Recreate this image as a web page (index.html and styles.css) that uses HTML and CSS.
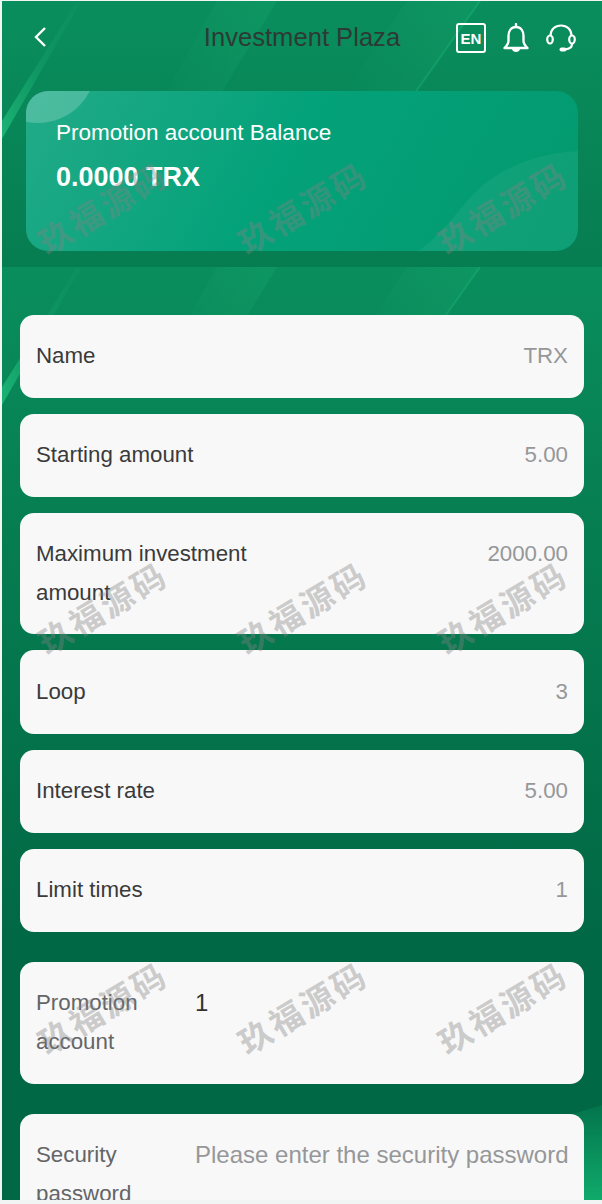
FILE: index.html
```html
<!DOCTYPE html>
<html lang="en">
<head>
    <meta charset="UTF-8">
    <title>Investment Plaza</title>
    <link rel="stylesheet" href="styles.css">
</head>
<body>

<div class="page">
    <section class="top">
        <svg class="backdrop" viewBox="0 0 600 933">
            <defs>
                <linearGradient id="base" x1="0" y1="0" x2="0" y2="1">
                    <stop offset="0" stop-color="#0a8e5d"/>
                    <stop offset="0.29" stop-color="#067d51"/>
                    <stop offset="0.72" stop-color="#016845"/>
                    <stop offset="1" stop-color="#016845"/>
                </linearGradient>
                <linearGradient id="streak" x1="0" y1="1" x2="1" y2="0">
                    <stop offset="0" stop-color="#22c27f" stop-opacity="0.75"/>
                    <stop offset="0.5" stop-color="#22c27f" stop-opacity="0.2"/>
                    <stop offset="1" stop-color="#22c27f" stop-opacity="0.05"/>
                </linearGradient>
                <linearGradient id="band" x1="0" y1="0" x2="1" y2="0">
                    <stop offset="0" stop-color="#22c27f" stop-opacity="0"/>
                    <stop offset="1" stop-color="#22c27f" stop-opacity="0.16"/>
                </linearGradient>
                <linearGradient id="corner" x1="0" y1="0" x2="0" y2="1">
                    <stop offset="0" stop-color="#03744c"/>
                    <stop offset="1" stop-color="#10aa6b"/>
                </linearGradient>
                <g id="art">
                    <rect width="600" height="933" fill="url(#base)"/>
                    <path d="M0 120 L74 2 L78 2 L0 138 Z" fill="url(#streak)"/>
                    <path d="M275 0 L205 115 L150 115 L215 0 Z" fill="url(#band)"/>
                    <path d="M478 0 L410 96 L340 96 L405 0 Z" fill="url(#band)"/>
                    <path d="M478 0 L410 96" fill="none" stroke="#22c27f" stroke-width="2" opacity="0.3"/>
                    <path d="M600 838 L530 860 L575 933 L600 933 Z" fill="url(#corner)"/>
                </g>
            </defs>
            <use href="#art"/>
        </svg>

        <header class="topbar">
            <svg class="back" viewBox="0 0 14 22">
                <path d="M12 2 L3 11 L12 20" fill="none" stroke="#fff" stroke-width="2.4"/>
            </svg>
            <h1 class="title">Investment Plaza</h1>
            <div class="tools">
                <span class="lang">EN</span>
                <svg class="bell" viewBox="0 0 26 30">
                    <path d="M13 1 V4 M13 4 C8 4 5.500 8 5.500 13 V18 C5.500 21 3.500 23 1.500 25 H24.500 C22.500 23 20.500 21 20.500 18 V13 C20.500 8 18 4 13 4 Z" fill="none" stroke="#fff" stroke-width="2.400" stroke-linejoin="round" stroke-linecap="round"/>
                    <path d="M9 26 H17 C16.500 30 9.500 30 9 26 Z" fill="#fff"/>
                </svg>
                <svg class="headset" viewBox="0 0 30 28">
                    <path d="M4.500 12 C4.500 5.500 9 1.500 15 1.500 S25.500 5.500 25.500 12" fill="none" stroke="#fff" stroke-width="2.200"/>
                    <ellipse cx="4" cy="15.500" rx="2.800" ry="4" fill="none" stroke="#fff" stroke-width="2.200"/>
                    <ellipse cx="26" cy="15.500" rx="2.800" ry="4" fill="none" stroke="#fff" stroke-width="2.200"/>
                    <path d="M26 20 C26 23.500 23 25 19 25.500" fill="none" stroke="#fff" stroke-width="2.200"/>
                    <rect x="13.500" y="23.500" width="7" height="4" rx="2" fill="#fff"/>
                </svg>
            </div>
        </header>

        <div class="balance">
            <svg class="balance-art" viewBox="0 0 552 160">
                <circle cx="12" cy="-26" r="58" fill="#fff" fill-opacity="0.2"/>
                <path d="M392 160 C422 140 436 110 462 90 C490 70 520 62 552 60 V160 Z" fill="#fff" fill-opacity="0.05"/>
            </svg>
            <p class="balance-label">Promotion account Balance</p>
            <p class="balance-num">0.0000 TRX</p>
        </div>
    </section>

    <section class="content">
        <svg class="backdrop" viewBox="0 0 600 933"><use href="#art"/></svg>

        <div class="group">
            <div class="cell"><span class="cell-title">Name</span><span class="cell-value">TRX</span></div>
            <div class="cell"><span class="cell-title">Starting amount</span><span class="cell-value">5.00</span></div>
            <div class="cell tight"><span class="cell-title">Maximum investment amount</span><span class="cell-value">2000.00</span></div>
            <div class="cell loose"><span class="cell-title">Loop</span><span class="cell-value">3</span></div>
            <div class="cell"><span class="cell-title">Interest rate</span><span class="cell-value">5.00</span></div>
            <div class="cell"><span class="cell-title">Limit times</span><span class="cell-value">1</span></div>
        </div>

        <div class="group fields">
            <label class="cell">
                <span class="field-title">Promotion account</span>
                <input class="field-input" type="text" value="1">
            </label>
            <label class="cell">
                <span class="field-title">Security password</span>
                <input class="field-input right" type="password" placeholder="Please enter the security password">
            </label>
        </div>
    </section>

    <div class="marks">
        <span class="mark">玖福源码</span><span class="mark">玖福源码</span><span class="mark">玖福源码</span>
        <span class="mark">玖福源码</span><span class="mark">玖福源码</span><span class="mark">玖福源码</span>
        <span class="mark">玖福源码</span><span class="mark">玖福源码</span><span class="mark">玖福源码</span>
    </div>
</div>

</body>
</html>
```

FILE: styles.css
```css
html, body {
    margin: 0;
    height: 1204px;
    overflow: hidden;
}

body {
    padding: 1px 0 0 2px;
    box-sizing: border-box;
    background-color: #f1f5f3;
    font-family: "Liberation Sans", Arial, sans-serif;
}

p, h1 {
    margin: 0;
}

.page {
    position: relative;
    width: 600px;
    height: 1199px;
    overflow: hidden;
}

.backdrop {
    position: absolute;
    top: 0;
    left: 0;
    width: 600px;
    height: 933px;
}

.top {
    position: relative;
    height: 266px;
    overflow: hidden;
}

.topbar {
    position: relative;
    display: flex;
    align-items: center;
    justify-content: center;
    height: 73px;
}

.back {
    position: absolute;
    left: 31px;
    top: 25px;
    width: 14px;
    height: 22px;
}

.title {
    font-size: 25.6px;
    font-weight: normal;
    color: #2d3a35;
}

.tools {
    position: absolute;
    right: 26px;
    top: 22px;
    display: flex;
    align-items: center;
    gap: 17px;
}

.lang {
    display: flex;
    align-items: center;
    justify-content: center;
    box-sizing: border-box;
    width: 30px;
    height: 30px;
    border: 2px solid #fff;
    border-radius: 3px;
    font-size: 15px;
    font-weight: bold;
    color: #fff;
}

.bell {
    width: 26px;
    height: 30px;
}

.headset {
    width: 30px;
    height: 28px;
}

.balance {
    position: relative;
    box-sizing: border-box;
    height: 160px;
    margin: 17px 24px 0;
    padding: 25px 30px;
    border-radius: 22px;
    overflow: hidden;
    background: linear-gradient(120deg, #22ab88 0%, #04a27a 45%, #03996e 100%);
    color: #fff;
}

.balance-art {
    position: absolute;
    top: 0;
    left: 0;
    width: 552px;
    height: 160px;
}

.balance-label {
    position: relative;
    font-size: 22.5px;
    line-height: 34px;
}

.balance-num {
    position: relative;
    margin-top: 10px;
    font-size: 27px;
    line-height: 34px;
    font-weight: bold;
}

.content {
    position: relative;
    height: 933px;
    overflow: hidden;
    padding: 48px 18px 0;
    box-sizing: border-box;
}

.group {
    position: relative;
    display: flex;
    flex-direction: column;
    gap: 16px;
}

.fields {
    margin-top: 30px;
    gap: 30px;
}

.cell {
    display: flex;
    padding: 21px 16px 23px;
    border-radius: 14px;
    background-color: #f8f8f8;
    font-size: 22.3px;
    line-height: 39px;
    color: #3a3a3b;
}

.tight {
    padding-bottom: 22px;
}

.loose {
    padding-top: 22px;
    padding-bottom: 23px;
}

.cell-title {
    flex: 1;
}

.cell-value {
    flex: 1;
    text-align: right;
    color: #969799;
}

.field-title {
    flex: none;
    width: 159px;
    color: #646566;
}

.field-input {
    flex: 1;
    min-width: 0;
    height: 39px;
    padding: 0;
    border: none;
    outline: none;
    background: none;
    font: inherit;
    font-size: 24px;
    color: #323233;
}

.right {
    text-align: right;
}

.field-input::placeholder {
    color: #969799;
}

/* watermark lies over everything */
.marks {
    position: absolute;
    top: 6px;
    left: 0;
    display: grid;
    grid-template-columns: repeat(3, 200px);
    grid-auto-rows: 400px;
    pointer-events: none;
}

.mark {
    align-self: center;
    justify-self: center;
    transform: rotate(-31deg);
    font-family: "Noto Sans CJK SC", sans-serif;
    font-size: 33px;
    font-weight: bold;
    line-height: 30px;
    letter-spacing: 3px;
    white-space: nowrap;
    color: rgba(130, 130, 130, 0.38);
}
```
